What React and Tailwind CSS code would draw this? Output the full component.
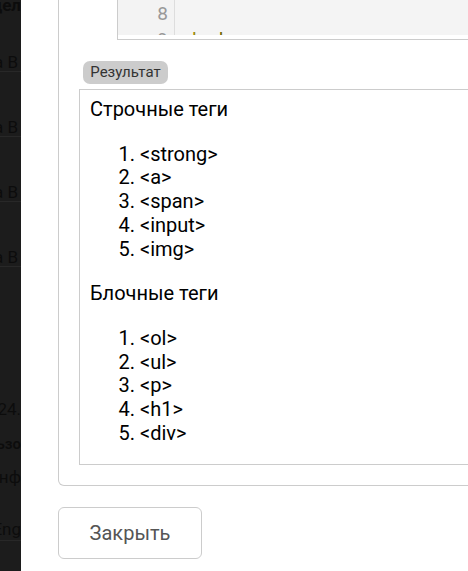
import React from "react";

const font = { fontFamily: "Roboto, 'Noto Sans', sans-serif" };

function StripRow({ h, text, cls = "", line = false }) {
  return (
    <div
      className={`flex justify-end items-center w-[21px] shrink-0 ${line ? "border-b border-[#282828]" : ""}`}
      style={{ height: h }}
    >
      <span className={`shrink-0 whitespace-nowrap ${cls}`}>{text}</span>
    </div>
  );
}

export default function App() {
  return (
    <div className="flex w-[468px] h-[571px] overflow-hidden bg-white" style={font}>
      {/* backdrop strip */}
      <div className="w-[21px] shrink-0 bg-[#1c1c1c] overflow-hidden flex flex-col text-[#0c0c0c] text-[17px] leading-[20px]">
        <div className="h-[18px] -mt-[4px] shrink-0 flex justify-end items-center">
          <span className="shrink-0 whitespace-nowrap font-bold">Модел</span>
        </div>
        <div className="h-[39px] shrink-0" />
        <StripRow h={19} text="Сцена В" cls="pr-[3px]" line />
        <div className="h-[46px] shrink-0" />
        <StripRow h={19} text="Сцена В" cls="pr-[3px]" line />
        <div className="h-[46px] shrink-0" />
        <StripRow h={19} text="Сцена В" cls="pr-[3px]" line />
        <div className="h-[46px] shrink-0" />
        <StripRow h={19} text="Сцена В" cls="pr-[3px]" line />
        <div className="h-[130px] shrink-0" />
        <StripRow h={24} text="2024." />
        <div className="h-[11px] shrink-0" />
        <StripRow h={24} text="Пользо" cls="text-[15px] font-semibold" />
        <div className="h-[9px] shrink-0" />
        <StripRow h={24} text="Инф" />
        <div className="h-[28px] shrink-0" />
        <StripRow h={24} text="Eng" line />
      </div>

      {/* modal */}
      <div className="flex-1 min-w-0 pl-[37px]">
        <div className="-mr-[30px] border border-t-0 border-[#cccccc] rounded-b-[6px] pl-[20px] pb-[20px]">
          {/* code block */}
          <div className="ml-[38px] h-[40px] border-l border-b border-[#cccccc] overflow-hidden">
            <div className="h-[35px] flex bg-[#f4f4f4] overflow-hidden">
              <div className="w-[57px] shrink-0 border-r border-[#dddddd] bg-[#f3f3f3] text-right pr-[6px] text-[#999999] text-[19px] leading-[26px] pt-[1px]">
                <div>8</div>
                <div>9</div>
              </div>
              <div className="pl-[17px] text-[19px] leading-[26px] pt-[1px] whitespace-nowrap">
                <div>&nbsp;</div>
                <div>
                  <span className="text-[#9a8a00]">l</span>
                  <span className="ml-[22px] text-[#6f6400]">l</span>
                </div>
              </div>
            </div>
          </div>

          {/* badge */}
          <div className="mt-[21px] ml-[4px] w-[85px] h-[23px] rounded-[7px] bg-[#cccccc] flex items-center justify-center text-[15px] text-[#333333]">
            Результат
          </div>

          {/* result box */}
          <div className="mt-[5px] border border-[#cccccc] pl-[10px] pt-[8px] pb-[19px] text-[20px] leading-[23.7px] text-black">
            <div>Строчные теги</div>
            <ol className="list-decimal pl-[50px] mt-[21px]">
              <li>&lt;strong&gt;</li>
              <li>&lt;a&gt;</li>
              <li>&lt;span&gt;</li>
              <li>&lt;input&gt;</li>
              <li>&lt;img&gt;</li>
            </ol>
            <div className="mt-[21px]">Блочные теги</div>
            <ol className="list-decimal pl-[50px] mt-[21px]">
              <li>&lt;ol&gt;</li>
              <li>&lt;ul&gt;</li>
              <li>&lt;p&gt;</li>
              <li>&lt;h1&gt;</li>
              <li>&lt;div&gt;</li>
            </ol>
          </div>
        </div>

        <button className="mt-[21px] w-[144px] h-[52px] border border-[#cccccc] rounded-[6px] bg-white text-[20px] text-[#555555] flex items-center justify-center">
          Закрыть
        </button>
      </div>
    </div>
  );
}
